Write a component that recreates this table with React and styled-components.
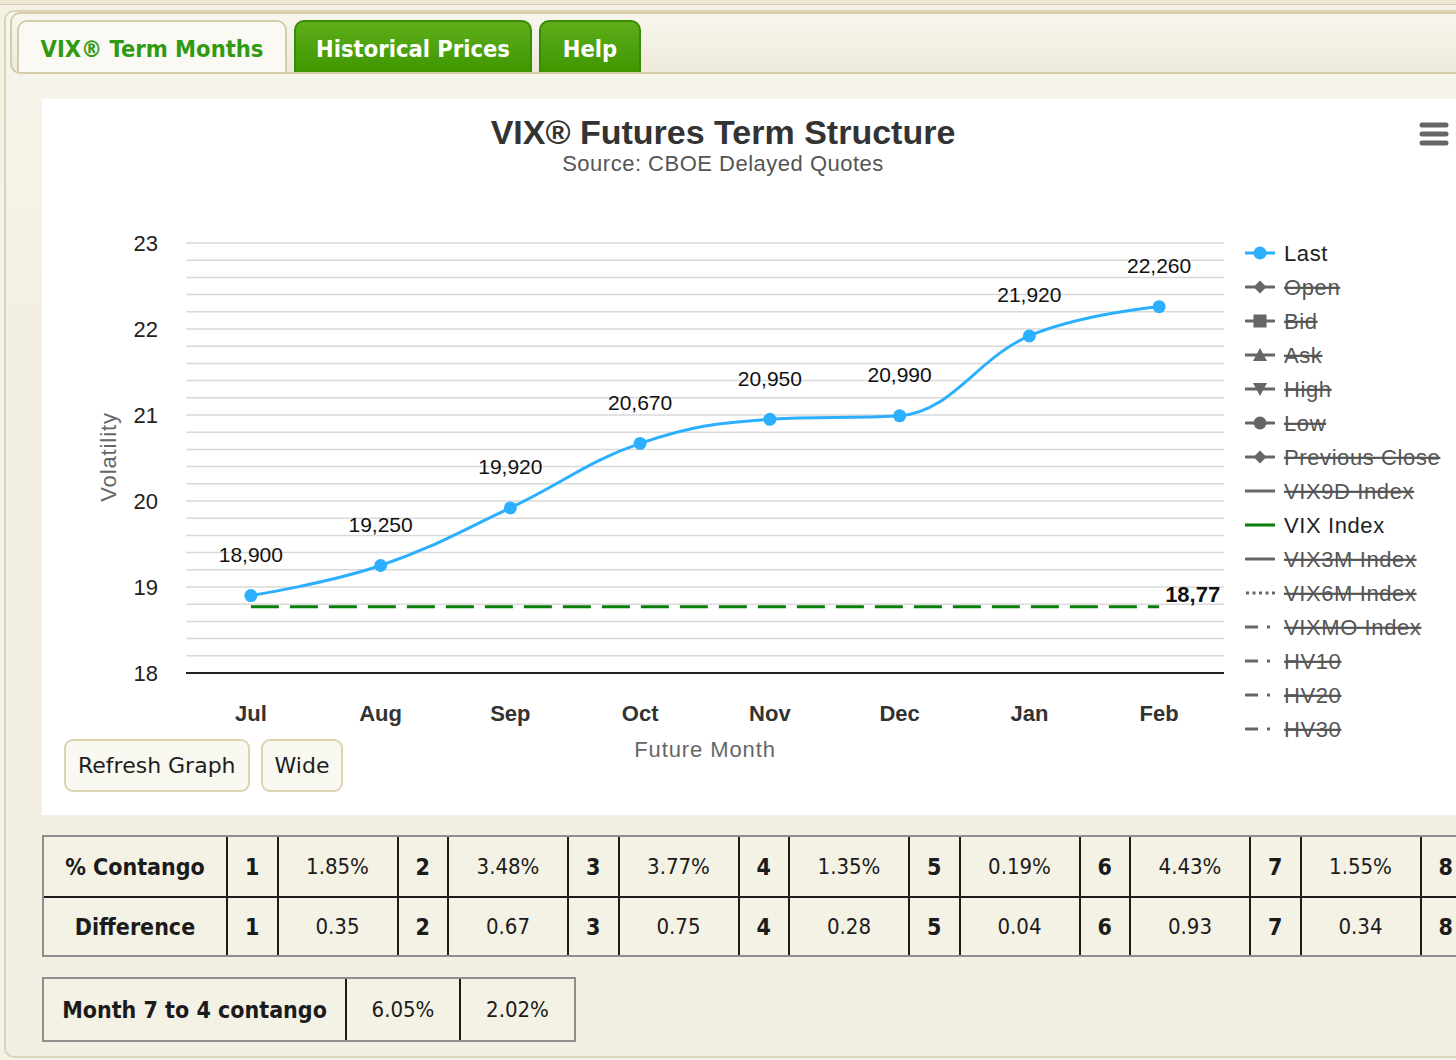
import React from 'react';
import styled, { createGlobalStyle, css } from 'styled-components';

const GlobalStyle = createGlobalStyle`
  html, body { margin: 0; padding: 0; overflow: hidden; background: #f4f1e5; }
  body { font-family: "DejaVu Sans", sans-serif; }
`;

const Page = styled.div`
  width: 1456px;
  height: 1060px;
  overflow: hidden;
  background: #f4f1e5;
`;

const TopStrip = styled.div`
  height: 4px;
  background: #ece6d2;
  border-bottom: 1px solid #d6ceb2;
`;

const Frame = styled.div`
  margin: 5px 0 0 4px;
  border: 2px solid #dcd4b9;
  border-right: none;
  border-radius: 10px 0 0 10px;
  padding: 0 0 14px 4px;
  background: linear-gradient(#f7f5ec, #f3f0e3 300px);
`;

const TabBar = styled.div`
  box-sizing: border-box;
  height: 62px;
  border: 2px solid #d5cca9;
  border-right: none;
  border-radius: 10px 0 0 10px;
  background: linear-gradient(#f8f6ee, #eeeadb);
  display: flex;
  align-items: flex-end;
  gap: 7px;
  padding-left: 5px;
`;

const Tab = styled.div`
  box-sizing: border-box;
  height: 52px;
  width: ${p => p.$w}px;
  padding-top: 3px;
  display: flex;
  align-items: center;
  justify-content: center;
  border-radius: 10px 10px 0 0;
  font: bold 23.5px "DejaVu Sans Condensed", "DejaVu Sans", sans-serif;
  ${p => p.$active
    ? css`
        background: #faf9f3;
        color: #2f9a12;
        border: 2px solid #d5cca9;
        border-bottom: none;
      `
    : css`
        background: linear-gradient(#5dae1a, #3f9700);
        color: #ffffff;
        border: 2px solid #3a8a05;
        border-bottom: none;
      `}
`;

const Content = styled.div`
  padding: 25px 0 0 32px;
  display: flex;
  flex-direction: column;
  gap: 20px;
`;

const ChartPanel = styled.div`
  width: 1414px;
  height: 716px;
  background: #ffffff;
  display: grid;
  grid-template: 1fr / 1fr;
`;

const ChartSvg = styled.svg`
  grid-area: 1 / 1;
  display: block;
`;

const ButtonRow = styled.div`
  grid-area: 1 / 1;
  align-self: end;
  justify-self: start;
  margin: 0 0 23px 22px;
  display: flex;
  gap: 11px;
`;

const Button = styled.button`
  box-sizing: border-box;
  height: 53px;
  padding: 0 12px;
  border: 2px solid #ddd3b0;
  border-radius: 9px;
  background: #f9f8f1;
  color: #1e1e1e;
  font: 22px "DejaVu Sans", sans-serif;
`;

const ChartTitle = styled.text`
  font: bold 34px "Liberation Sans", Arial, sans-serif;
  fill: #333333;
`;

const ChartSubtitle = styled.text`
  font: 22px "Liberation Sans", Arial, sans-serif;
  letter-spacing: 0.5px;
  fill: #555555;
`;

const AxisLabel = styled.text`
  font: ${p => (p.$bold ? 'bold ' : '')}22px "Liberation Sans", Arial, sans-serif;
  fill: ${p => (p.$bold ? '#333333' : '#222222')};
`;

const AxisTitle = styled.text`
  font: 22px "Liberation Sans", Arial, sans-serif;
  letter-spacing: 0.9px;
  fill: #666666;
`;

const DataLabel = styled.text`
  font: ${p => (p.$bold ? 'bold 22px' : '21px')} "Liberation Sans", Arial, sans-serif;
  fill: #111111;
`;

const LegendText = styled.text`
  font: 22px "Liberation Sans", Arial, sans-serif;
  letter-spacing: 0.6px;
  fill: ${p => (p.$on ? '#222222' : '#555555')};
  text-decoration: ${p => (p.$on ? 'none' : 'line-through')};
`;

const Grid = styled.div`
  display: grid;
  width: max-content;
  grid-template-columns: ${p => p.$cols};
  border: 2px solid #8e8e8e;
  background: #f4f1e5;
`;

const Cell = styled.div`
  box-sizing: border-box;
  height: ${p => p.$h}px;
  display: flex;
  align-items: center;
  justify-content: center;
  font: ${p => (p.$bold ? 'bold 23px' : '22px')} "DejaVu Sans Condensed", "DejaVu Sans", sans-serif;
  color: #1b1b1b;
  border-right: ${p => (p.$last ? 'none' : '2px solid #1c1c1c')};
  border-bottom: ${p => (p.$divider ? '2px solid #1c1c1c' : 'none')};
`;

/* ---------- chart geometry (panel coords) ---------- */
const PL = 144, PR = 1182, PB = 574, UNIT = 86;
const months = ['Jul', 'Aug', 'Sep', 'Oct', 'Nov', 'Dec', 'Jan', 'Feb'];
const values = [18.9, 19.25, 19.92, 20.67, 20.95, 20.99, 21.92, 22.26];
const labels = ['18,900', '19,250', '19,920', '20,670', '20,950', '20,990', '21,920', '22,260'];
const colW = (PR - PL) / months.length;
const xOf = i => PL + colW * (i + 0.5);
const yOf = v => PB - (v - 18) * UNIT;
const pts = values.map((v, i) => ({ x: xOf(i), y: yOf(v) }));

function splinePath(points) {
  const smoothing = 1.5;
  const denom = smoothing + 1;
  const ctrl = points.map(() => null);
  let d = `M ${points[0].x} ${points[0].y}`;
  for (let i = 1; i < points.length; i++) {
    const p = points[i];
    const last = points[i - 1];
    const next = points[i + 1];
    let lcx = p.x;
    let lcy = p.y;
    if (next) {
      const leftContX = (smoothing * p.x + last.x) / denom;
      let leftContY = (smoothing * p.y + last.y) / denom;
      const rightContX = (smoothing * p.x + next.x) / denom;
      let rightContY = (smoothing * p.y + next.y) / denom;
      let correction = 0;
      if (rightContX !== leftContX) {
        correction = ((rightContY - leftContY) * (rightContX - p.x)) / (rightContX - leftContX) + p.y - rightContY;
      }
      leftContY += correction;
      rightContY += correction;
      if (leftContY > last.y && leftContY > p.y) {
        leftContY = Math.max(last.y, p.y);
        rightContY = 2 * p.y - leftContY;
      } else if (leftContY < last.y && leftContY < p.y) {
        leftContY = Math.min(last.y, p.y);
        rightContY = 2 * p.y - leftContY;
      }
      if (rightContY > next.y && rightContY > p.y) {
        rightContY = Math.max(next.y, p.y);
        leftContY = 2 * p.y - rightContY;
      } else if (rightContY < next.y && rightContY < p.y) {
        rightContY = Math.min(next.y, p.y);
        leftContY = 2 * p.y - rightContY;
      }
      ctrl[i] = { x: rightContX, y: rightContY };
      lcx = leftContX;
      lcy = leftContY;
    }
    const rc = ctrl[i - 1] || last;
    d += ` C ${rc.x} ${rc.y} ${lcx} ${lcy} ${p.x} ${p.y}`;
  }
  return d;
}

const gridValues = Array.from({ length: 25 }, (_, i) => 18.2 + i * 0.2);

const legendItems = [
  { label: 'Last', kind: 'circle', on: true, color: '#2caffe' },
  { label: 'Open', kind: 'diamond' },
  { label: 'Bid', kind: 'square' },
  { label: 'Ask', kind: 'triUp' },
  { label: 'High', kind: 'triDown' },
  { label: 'Low', kind: 'circle' },
  { label: 'Previous Close', kind: 'diamond' },
  { label: 'VIX9D Index', kind: 'line' },
  { label: 'VIX Index', kind: 'line', on: true, color: '#0a7d0a' },
  { label: 'VIX3M Index', kind: 'line' },
  { label: 'VIX6M Index', kind: 'dot' },
  { label: 'VIXMO Index', kind: 'dashdot' },
  { label: 'HV10', kind: 'dashdot' },
  { label: 'HV20', kind: 'dashdot' },
  { label: 'HV30', kind: 'dashdot' },
];

function LegendSymbol({ kind, y, color }) {
  const c = color || '#666666';
  const x0 = 1203, x1 = 1233, cx = 1218;
  const line = <line x1={x0} x2={x1} y1={y} y2={y} stroke={c} strokeWidth="3" />;
  switch (kind) {
    case 'circle':
      return <g>{line}<circle cx={cx} cy={y} r="6.5" fill={c} /></g>;
    case 'diamond':
      return <g>{line}<path d={`M ${cx} ${y - 6.5} L ${cx + 6.5} ${y} L ${cx} ${y + 6.5} L ${cx - 6.5} ${y} Z`} fill={c} /></g>;
    case 'square':
      return <g>{line}<rect x={cx - 6.5} y={y - 6.5} width="13" height="13" fill={c} /></g>;
    case 'triUp':
      return <g>{line}<path d={`M ${cx} ${y - 7} L ${cx + 7} ${y + 6} L ${cx - 7} ${y + 6} Z`} fill={c} /></g>;
    case 'triDown':
      return <g>{line}<path d={`M ${cx - 7} ${y - 6} L ${cx + 7} ${y - 6} L ${cx} ${y + 7} Z`} fill={c} /></g>;
    case 'dot':
      return <line x1={x0 + 1} x2={x1} y1={y} y2={y} stroke={c} strokeWidth="3" strokeDasharray="3 3.5" />;
    case 'dashdot':
      return (
        <g>
          <line x1={x0} x2={x0 + 13} y1={y} y2={y} stroke={c} strokeWidth="3" />
          <rect x={x0 + 22} y={y - 1.5} width="3" height="3" fill={c} />
        </g>
      );
    default:
      return line;
  }
}

function Chart() {
  return (
    <ChartSvg width="1414" height="716" viewBox="0 0 1414 716">
      <ChartTitle x="681" y="33" textAnchor="middle" dominantBaseline="central">VIX® Futures Term Structure</ChartTitle>
      <ChartSubtitle x="681" y="64" textAnchor="middle" dominantBaseline="central">Source: CBOE Delayed Quotes</ChartSubtitle>

      {/* hamburger menu */}
      <g stroke="#666666" strokeWidth="5" strokeLinecap="round">
        <line x1="1380" x2="1404" y1="26" y2="26" />
        <line x1="1380" x2="1404" y1="35" y2="35" />
        <line x1="1380" x2="1404" y1="44" y2="44" />
      </g>

      {gridValues.map(v => (
        <line key={v.toFixed(1)} x1={PL} x2={PR} y1={yOf(v)} y2={yOf(v)} stroke="#d9d9d9" strokeWidth="1.5" />
      ))}
      <line x1={PL} x2={PR} y1={PB} y2={PB} stroke="#222222" strokeWidth="2" />

      {[18, 19, 20, 21, 22, 23].map(v => (
        <AxisLabel key={v} x="116" y={yOf(v)} textAnchor="end" dominantBaseline="central">{v}</AxisLabel>
      ))}
      <AxisTitle x="66" y="358" textAnchor="middle" dominantBaseline="central" transform="rotate(-90 66 358)">Volatility</AxisTitle>

      {months.map((m, i) => (
        <AxisLabel key={m} $bold x={xOf(i)} y="614" textAnchor="middle" dominantBaseline="central">{m}</AxisLabel>
      ))}
      <AxisTitle x="663" y="650" textAnchor="middle" dominantBaseline="central">Future Month</AxisTitle>

      {/* VIX index */}
      <line x1={xOf(0)} x2={xOf(7)} y1={yOf(18.77)} y2={yOf(18.77)} stroke="#0a7d0a" strokeWidth="3" strokeDasharray="28 11" />
      <DataLabel $bold x={xOf(7) + 6} y={yOf(18.77) - 12} dominantBaseline="central">18,77</DataLabel>

      {/* Last series */}
      <path d={splinePath(pts)} fill="none" stroke="#2caffe" strokeWidth="3" />
      {pts.map((p, i) => (
        <circle key={months[i]} cx={p.x} cy={p.y} r="6.5" fill="#2caffe" />
      ))}
      {pts.map((p, i) => (
        <DataLabel key={labels[i]} x={p.x} y={p.y - 41} textAnchor="middle" dominantBaseline="central">{labels[i]}</DataLabel>
      ))}

      {legendItems.map((item, i) => {
        const y = 154 + i * 34;
        return (
          <g key={item.label}>
            <LegendSymbol kind={item.kind} y={y} color={item.color} />
            <LegendText $on={item.on} x="1242" y={y} dominantBaseline="central">{item.label}</LegendText>
          </g>
        );
      })}
    </ChartSvg>
  );
}

const contango = ['1.85%', '3.48%', '3.77%', '1.35%', '0.19%', '4.43%', '1.55%', ''];
const diffs = ['0.35', '0.67', '0.75', '0.28', '0.04', '0.93', '0.34', ''];

function ContangoTable() {
  const rows = [
    { title: '% Contango', vals: contango, h: 61, divider: true },
    { title: 'Difference', vals: diffs, h: 57, divider: false },
  ];
  return (
    <Grid $cols="184px repeat(8, 50.5px 120px)">
      {rows.map(r => (
        <React.Fragment key={r.title}>
          <Cell $bold $h={r.h} $divider={r.divider}>{r.title}</Cell>
          {r.vals.map((v, i) => (
            <React.Fragment key={i}>
              <Cell $bold $h={r.h} $divider={r.divider}>{i + 1}</Cell>
              <Cell $h={r.h} $divider={r.divider} $last={i === 7}>{v}</Cell>
            </React.Fragment>
          ))}
        </React.Fragment>
      ))}
    </Grid>
  );
}

function SummaryTable() {
  return (
    <Grid $cols="303px 114px 113px">
      <Cell $bold $h={61}>Month 7 to 4 contango</Cell>
      <Cell $h={61}>6.05%</Cell>
      <Cell $h={61} $last>2.02%</Cell>
    </Grid>
  );
}

export default function App() {
  return (
    <Page>
      <GlobalStyle />
      <TopStrip />
      <Frame>
        <TabBar>
          <Tab $active $w={270}>VIX® Term Months</Tab>
          <Tab $w={238}>Historical Prices</Tab>
          <Tab $w={102}>Help</Tab>
        </TabBar>
        <Content>
          <ChartPanel>
            <Chart />
            <ButtonRow>
              <Button>Refresh Graph</Button>
              <Button>Wide</Button>
            </ButtonRow>
          </ChartPanel>
          <ContangoTable />
          <SummaryTable />
        </Content>
      </Frame>
    </Page>
  );
}
